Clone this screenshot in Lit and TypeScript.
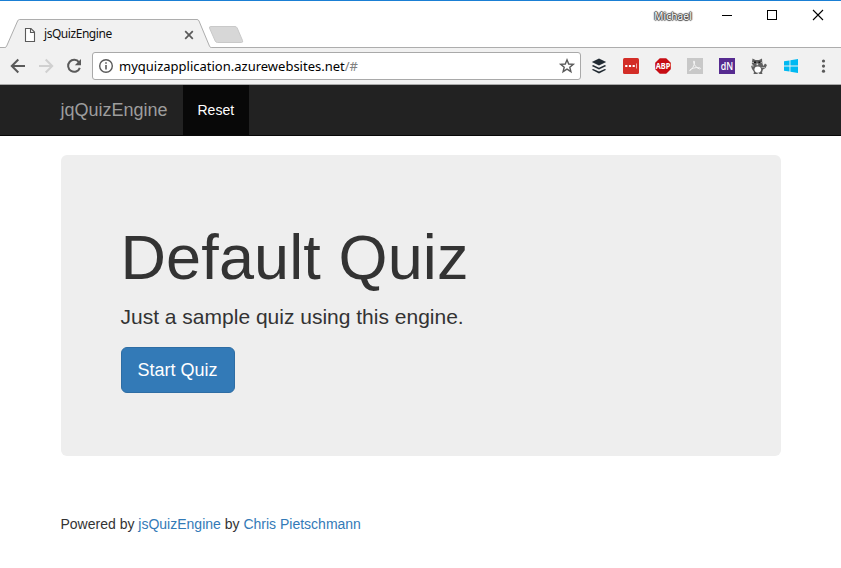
import { LitElement, html, css, svg } from "lit";
import { customElement } from "lit/decorators.js";

@customElement("window-frame")
class WindowFrame extends LitElement {
  static styles = css`
    :host {
      display: flex;
      box-sizing: border-box;
      height: 48px;
      border-top: 1px solid #1a7fd4;
      background: linear-gradient(#adadad, #adadad) 0 46px / 100% 1px no-repeat #fff;
      justify-content: space-between;
      font-family: "Noto Sans", "Open Sans", sans-serif;
    }
    .tabs { display: flex; padding-left: 4px; }
    .tab {
      position: relative;
      display: flex;
      align-items: center;
      box-sizing: border-box;
      width: 208px;
      height: 29px;
      margin-top: 18px;
      padding: 2px 0 0 20px;
    }
    .shape { position: absolute; left: 0; top: 0; }
    .page, .title, .close { position: relative; }
    .page { display: block; }
    .title {
      width: 137px;
      margin: 0 0 1px 8px;
      font-size: 12px;
      line-height: 16px;
      letter-spacing: -0.45px;
      color: #111;
      white-space: nowrap;
    }
    .new { margin: 24px 0 0 -4px; }
    .controls { display: flex; align-items: flex-start; }
    .user {
      margin: 7px 29px 0 0;
      font-size: 10px;
      line-height: 16px;
      letter-spacing: 0.2px;
      color: #fff;
      text-shadow: 0 0 1px #333, 1px 0 1px #444, -1px 0 1px #555, 0 1px 1px #444, 0 -1px 1px #555;
    }
    .buttons { display: block; margin-top: 7px; }
  `;
  render() {
    return html`
      <div class="tabs">
        <div class="tab">
          <svg class="shape" width="208" height="29" viewBox="0 0 208 29">
            <path d="M0 28.5H.8Q2 28.5 2.6 27.2L13.6 2Q14.3.5 15.5.5H193Q194.4.5 195 2L205.5 27.2Q206 28.5 207.5 28.5H208V29H0Z" fill="#f1f1f1"/>
            <path d="M0 28.5H.8Q2 28.5 2.6 27.2L13.6 2Q14.3.5 15.5.5H193Q194.4.5 195 2L205.5 27.2Q206 28.5 207.5 28.5H208" fill="none" stroke="#adadad"/>
          </svg>
          <svg class="page" width="12" height="16" viewBox="0 0 12 16"><path d="M1.500 1.500H7L10.500 5V14.500H1.500ZM6.500 1.500V5.500H10.500" fill="#fff" stroke="#5a5a5a" stroke-width="1.100"/></svg>
          <span class="title">jsQuizEngine</span>
          <svg class="close" width="16" height="16" viewBox="0 0 16 16"><path d="M4.200 4.200L11.800 11.800M11.800 4.200L4.200 11.800" stroke="#5a5a5a" stroke-width="1.700"/></svg>
        </div>
        <svg class="new" width="37" height="20" viewBox="0 0 37 20"><path d="M3 1.500H27Q28.500 1.500 29.200 3L34.500 15.500Q35.300 17.500 33.500 17.500H9.500Q8 17.500 7.200 16L1.500 3Q1 1.500 3 1.500Z" fill="#d7d7d7" stroke="#c9c9c9"/></svg>
      </div>
      <div class="controls">
        <span class="user">Michael</span>
        <svg class="buttons" width="120" height="16" viewBox="721 8 120 16" shape-rendering="crispEdges">
          <path d="M722 15.500H732M767.500 10.500H776.500V19.500H767.500Z" fill="none" stroke="#000"/>
          <path d="M813 10L823 20M823 10L813 20" stroke="#000" stroke-width="1.100" shape-rendering="auto"/>
        </svg>
      </div>`;
  }
}

const extensions = [
  svg`<path d="M8 .5L15.200 4 8 7.500.8 4Z" fill="#222b33"/><path d="M2.200 7L8 9.800 13.800 7 15.200 7.900 8 11.500.8 7.900ZM2.200 10.900L8 13.600 13.800 10.900 15.200 11.800 8 15.600.8 11.800Z" fill="#222b33"/>`,
  svg`<rect width="16" height="16" rx="1.500" fill="#d32d27"/><path d="M2.200 8H4.400M5.900 8H8.100M9.600 8H11.800" stroke="#fff" stroke-width="2.200"/><path d="M13.500 5.500V10.500" stroke="#f0aaa8"/>`,
  svg`<path d="M4.800.2H11.200L15.800 4.800V11.200L11.200 15.800H4.800L.2 11.200V4.800Z" fill="#c70d14"/><text class="abp" x="8" y="11.200" text-anchor="middle" textLength="14.600" lengthAdjust="spacingAndGlyphs">ABP</text>`,
  svg`<rect width="16" height="16" fill="#c8c8c8"/><path d="M2.700 12.700C4.700 11.700 7.800 7.500 7.600 3.800 7.400 2.300 6.200 2.700 6.500 4.200 7.200 7.500 10.200 10.700 12.800 11 14.300 11 13.500 9.500 11.500 9.500 8.500 9.300 4.500 10.500 2.900 11.900Z" fill="none" stroke="#f4f4f4" stroke-width="1"/>`,
  svg`<rect width="16" height="16" fill="#562b90"/><text class="dn" x="8" y="12" text-anchor="middle" textLength="12.400" lengthAdjust="spacingAndGlyphs">dN</text>`,
  svg`<path d="M1.500.5L4.500 2H8L11 .5 11.300 5 12.300 8 14 5.500 16 7 14.500 10 12 11.500 11 14.500 11.500 16H8.500L7.500 15 6 16H2.500L3 14 1 11 0 8 2.200 7.500.8 5.500Z" fill="#606060"/><path d="M1 4.500H3.500M9 4.500H11.500M.5 8H3M10.500 9.500H14" stroke="#aaa"/><path d="M3 3.500H5V5H3ZM7.500 3.500H9.500V5H7.500Z" fill="#161616"/><path d="M5.500 5.500H7.200V7.200H5.500Z" fill="#ddd"/><ellipse cx="6.800" cy="11.600" rx="3.300" ry="3.100" fill="#fff"/>`,
  svg`<path d="M1 3.200L6.500 2.400V7.500H1ZM7.400 2.200L15 1.100V7.500H7.400ZM1 8.400H6.500V13.600L1 12.800ZM7.400 8.400H15V15L7.400 13.800Z" fill="#00b9f2"/>`,
  svg`<circle cx="8.500" cy="3" r="1.600" fill="#5a5a5a"/><circle cx="8.500" cy="8.100" r="1.600" fill="#5a5a5a"/><circle cx="8.500" cy="13.200" r="1.600" fill="#5a5a5a"/>`,
];

@customElement("browser-toolbar")
class BrowserToolbar extends LitElement {
  static styles = css`
    :host {
      display: flex;
      align-items: center;
      box-sizing: border-box;
      height: 37px;
      padding: 0 10px;
      background: #f1f1f1;
      border-bottom: 1px solid #a9a9a9;
      font-family: "Noto Sans", "Open Sans", sans-serif;
    }
    svg { display: block; flex: none; overflow: visible; }
    .nav { display: flex; gap: 12px; width: 82px; }
    .field {
      display: flex;
      align-items: center;
      box-sizing: border-box;
      width: 489px;
      height: 28px;
      padding: 0 5px;
      border: 1px solid #a9a9a9;
      border-radius: 3px;
      background: #fff;
    }
    .url {
      flex: 1;
      margin-left: 5px;
      font-size: 13px;
      line-height: 18px;
      color: #000;
      white-space: nowrap;
    }
    .path { color: #808080; }
    .extensions { display: flex; gap: 16px; margin-left: 10px; }
    .abp { font: 700 8.500px "Noto Sans", sans-serif; fill: #fff; }
    .dn { font: 600 11px "Open Sans", sans-serif; fill: #fff; }
  `;
  render() {
    return html`
      <div class="nav">
        <svg width="16" height="16" viewBox="0 0 16 16"><path d="M15 8H2.500M8.300 1.500L1.800 8L8.300 14.500" fill="none" stroke="#5a5a5a" stroke-width="2"/></svg>
        <svg width="16" height="16" viewBox="0 0 16 16"><path d="M1 8H13.500M7.700 1.500L14.200 8L7.700 14.500" fill="none" stroke="#d0d0d0" stroke-width="2"/></svg>
        <svg width="16" height="16" viewBox="0 0 16 16"><path d="M13 4.300A6 6 0 1 0 13.800 9.800" fill="none" stroke="#5a5a5a" stroke-width="2"/><path d="M15 1V7.200H8.800Z" fill="#5a5a5a"/></svg>
      </div>
      <div class="field">
        <svg width="16" height="16" viewBox="0 0 16 16"><circle cx="8" cy="8" r="6.300" fill="none" stroke="#5a5a5a" stroke-width="1.400"/><path d="M8 7V11.500M8 4.200V5.800" stroke="#5a5a5a" stroke-width="1.600"/></svg>
        <span class="url">myquizapplication.azurewebsites.net<span class="path">/#</span></span>
        <svg width="16" height="16" viewBox="0 0 16 16"><path d="M8 1.800L9.700 6 14.300 6.300 10.800 9.200 11.900 13.700 8 11.200 4.100 13.700 5.200 9.200 1.700 6.300 6.300 6Z" fill="none" stroke="#5a5a5a" stroke-width="1.400"/></svg>
      </div>
      <div class="extensions">
        ${extensions.map((icon) => html`<svg width="16" height="16" viewBox="0 0 16 16">${icon}</svg>`)}
      </div>`;
  }
}

@customElement("quiz-page")
class QuizPage extends LitElement {
  static styles = css`
    :host {
      display: block;
      font: 14px/20px "Liberation Sans", Arial, sans-serif;
      color: #333;
    }
    a { color: #337ab7; text-decoration: none; }
    .navbar {
      display: flex;
      box-sizing: border-box;
      height: 51px;
      padding-left: 60.500px;
      background: #222;
      border-bottom: 1px solid #080808;
    }
    .brand { width: 122.500px; font-size: 18px; line-height: 50px; color: #9d9d9d; }
    .reset {
      box-sizing: border-box;
      width: 66px;
      line-height: 50px;
      padding-left: 14.500px;
      color: #fff;
      background: #080808;
    }
    .jumbotron {
      box-sizing: border-box;
      height: 301px;
      margin: 19px 60px 0 61px;
      padding: 66.500px 60px 0 59.500px;
      border-radius: 6px;
      background: #eee;
    }
    h1 { margin: 0; font-size: 63px; font-weight: 500; line-height: 70px; letter-spacing: 0.12px; }
    p { margin: 10.500px 0 15px; font-size: 21px; line-height: 30px; }
    button {
      display: block;
      width: 114px;
      height: 46px;
      margin-left: 0.500px;
      padding: 0 1px 0 0;
      border: 1px solid #2e6da4;
      border-radius: 6px;
      background: #337ab7;
      color: #fff;
      font: 18px/24px "Liberation Sans", Arial, sans-serif;
    }
    footer { margin: 58px 0 0 60.500px; }
  `;
  render() {
    return html`
      <nav class="navbar"><span class="brand">jqQuizEngine</span><span class="reset">Reset</span></nav>
      <main class="jumbotron">
        <h1>Default Quiz</h1>
        <p>Just a sample quiz using this engine.</p>
        <button>Start Quiz</button>
      </main>
      <footer>Powered by <a>jsQuizEngine</a> by <a>Chris Pietschmann</a></footer>`;
  }
}

@customElement("app-root")
class AppRoot extends LitElement {
  static styles = css`
    :host { display: block; height: 568px; overflow: hidden; background: #fff; }
  `;
  render() {
    return html`<window-frame></window-frame><browser-toolbar></browser-toolbar><quiz-page></quiz-page>`;
  }
}
